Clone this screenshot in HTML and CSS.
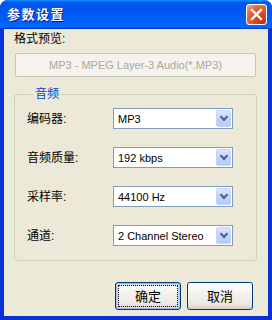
FILE: index.html
```html
<!doctype html>
<html>
<head>
<meta charset="UTF-8">
<title>参数设置</title>
<link rel="stylesheet" href="styles.css">
</head>
<body>
<div class="window">
    <div class="titlebar">
        <span class="title">参数设置</span>
        <span class="close">
            <svg width="13" height="13" viewBox="0 0 13 13"><path d="M2 2L11 11M11 2L2 11" stroke="#fff" stroke-width="2.4" stroke-linecap="square"/></svg>
        </span>
    </div>
    <div class="client">
        <div class="caption">格式预览:</div>
        <div class="preview">MP3 - MPEG Layer-3 Audio(*.MP3)</div>
        <fieldset class="group">
            <legend>音频</legend>
            <div class="row">
                <label>编码器:</label>
                <div class="combo"><span>MP3</span><i class="drop"></i></div>
            </div>
            <div class="row">
                <label>音频质量:</label>
                <div class="combo"><span>192 kbps</span><i class="drop"></i></div>
            </div>
            <div class="row">
                <label>采样率:</label>
                <div class="combo"><span>44100 Hz</span><i class="drop"></i></div>
            </div>
            <div class="row">
                <label>通道:</label>
                <div class="combo"><span>2 Channel Stereo</span><i class="drop"></i></div>
            </div>
        </fieldset>
        <div class="buttons">
            <button class="btn default"><span>确定</span></button>
            <button class="btn"><span>取消</span></button>
        </div>
    </div>
</div>
</body>
</html>
```

FILE: styles.css
```css
body,div,fieldset,legend{margin:0;padding:0;}
body{background:#fff;font:12px/14px "Liberation Sans","Noto Sans CJK SC",sans-serif;color:#000;}
.window{width:272px;height:320px;display:flex;flex-direction:column;background:#0831d9;border-radius:8px 8px 0 0;overflow:hidden;}
.titlebar{height:29px;flex:none;display:flex;align-items:center;justify-content:space-between;padding:0 5px 0 7px;background:linear-gradient(to bottom,#0997ff,#0058ee 8%,#0056ee 40%,#0066ff 88%,#0066ff 93%,#005bff 95%,#003dd7 96%,#003dd7);}
.title{color:#fff;font-weight:bold;font-size:13px;letter-spacing:1.5px;text-shadow:1px 1px #0f1089;}
.close{width:21px;height:21px;box-sizing:border-box;border:1px solid #fff;border-radius:3px;display:flex;align-items:center;justify-content:center;background:radial-gradient(circle at 80% 85%,#c4340f 0%,#dc5a32 55%,#e5805f 80%,#f7c2ad 100%);}
.close svg{display:block;}
.client{flex:1;margin:0 4px 4px;background:#ece9d8;padding:0 11px 0 10px;display:flex;flex-direction:column;}
.caption{margin-top:3px;height:14px;}
.preview{margin:7px 1px 0;height:24px;box-sizing:border-box;border:1px solid #c9c7ba;border-radius:2px;background:#f4f3ee;color:#aca899;text-align:center;line-height:22px;font-size:11px;}
.group{margin-top:10px;border:1px solid #d0d0bf;border-radius:3px;padding:7px 12px 14px;min-width:0;}
.group legend{color:#0046d5;padding:0 2px;margin-left:6px;line-height:14px;}
.row{display:flex;align-items:center;}
.row + .row{margin-top:18px;}
.row label{width:86px;flex:none;}
.combo{width:120px;height:21px;box-sizing:border-box;border:1px solid #7f9db9;background:#fff;display:flex;align-items:center;justify-content:space-between;padding:1px;}
.combo span{padding-left:3px;font-size:11px;white-space:nowrap;}
.drop{width:15px;height:17px;flex:none;box-sizing:border-box;border:1px solid #c3d3fd;border-radius:2px;background:linear-gradient(to bottom,#dce6fd,#c1d3fb 50%,#b6cbf8);position:relative;}
.drop:after{content:"";position:absolute;left:4px;top:3px;width:4px;height:4px;border-right:2px solid #4d6185;border-bottom:2px solid #4d6185;transform:rotate(45deg);}
.buttons{display:flex;justify-content:flex-end;gap:6px;margin-top:21px;padding-right:4px;}
.btn{width:66px;height:28px;box-sizing:border-box;border:1px solid #003c74;border-radius:3px;background:linear-gradient(to bottom,#fff,#f3f2ee 40%,#ece9e0 80%,#d6d0c5);font:13px/14px "Noto Sans CJK SC",sans-serif;color:#000;padding:2px;}
.btn span{display:flex;align-items:center;justify-content:center;height:100%;}
.btn.default{box-shadow:inset 0 0 0 1px #a6b9e8,inset 0 0 0 2px #cedcf8;}
.btn.default span{outline:1px dotted #000;outline-offset:-1px;}
```
